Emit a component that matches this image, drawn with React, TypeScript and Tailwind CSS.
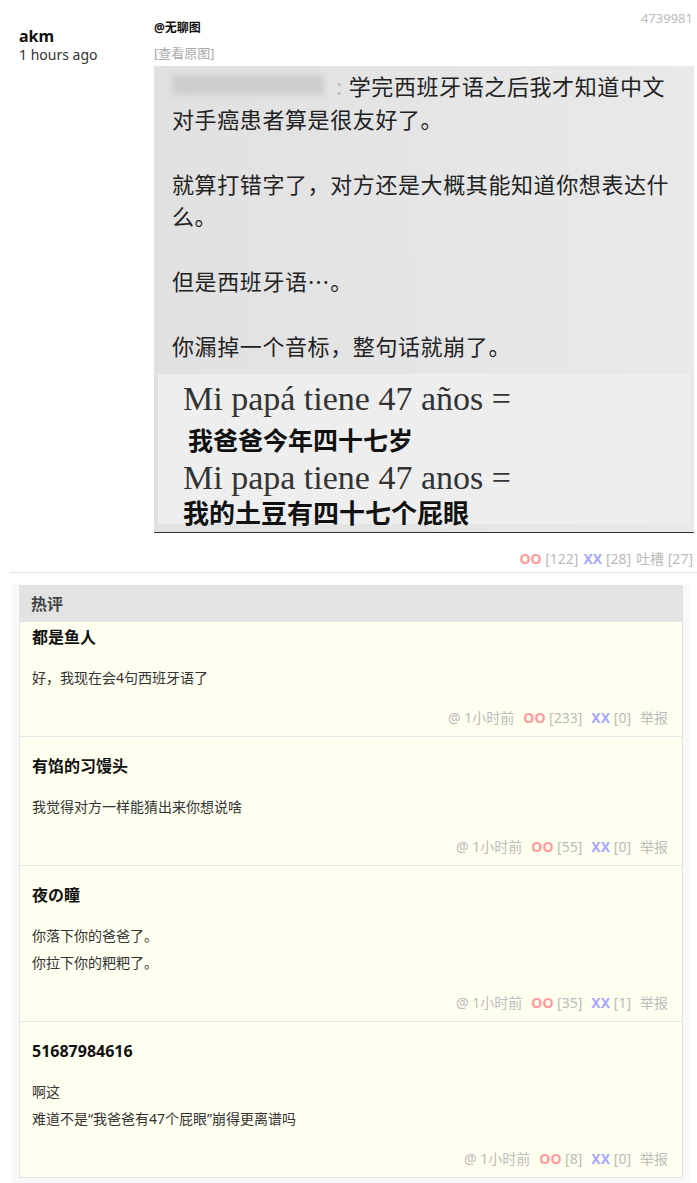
const hot = [
  {
    name: "都是鱼人",
    body: ["好，我现在会4句西班牙语了"],
    oo: 233,
    xx: 0,
    first: true,
  },
  { name: "有馅的习馒头", body: ["我觉得对方一样能猜出来你想说啥"], oo: 55, xx: 0 },
  { name: "夜の瞳", body: ["你落下你的爸爸了。", "你拉下你的粑粑了。"], oo: 35, xx: 1 },
  {
    name: "51687984616",
    body: ["啊这", "难道不是“我爸爸有47个屁眼”崩得更离谱吗"],
    oo: 8,
    xx: 0,
  },
];

function Comment({ c }: { c: (typeof hot)[number] }) {
  return (
    <div
      className={`border-b border-[#e6e6e6] bg-[#fffff0] px-[12px] pb-[8px] last:border-b-0 ${
        c.first ? "pt-[5px]" : "pt-[19px]"
      }`}
    >
      <div className="text-[16px] leading-[20px] font-bold text-[#111]">{c.name}</div>
      <div className="mt-[17px] text-[14px] leading-[27px] text-[#333]">
        {c.body.map((line) => (
          <div key={line}>{line}</div>
        ))}
      </div>
      <div className="mt-[17px] flex justify-end gap-[9px] pr-[2px] text-[14px] leading-[20px] text-[#bbb]">
        <span>@ 1小时前</span>
        <span>
          <b className="text-[#ff9b9b]">OO</b> [{c.oo}]
        </span>
        <span>
          <b className="text-[#a8a8ff]">XX</b> [{c.xx}]
        </span>
        <span>举报</span>
      </div>
    </div>
  );
}

export default function App() {
  return (
    <div className="relative min-h-[1183px] bg-white font-['Noto_Sans','Noto_Sans_CJK_SC',sans-serif] text-[#222]">
      <span className="absolute top-[10px] right-[4px] text-[13px] leading-[16px] text-[#bbb]">4739981</span>

      <div className="flex">
        <div className="w-[154px] shrink-0 pt-[27px] pl-[19px]">
          <div className="text-[16px] leading-[18px] font-bold text-[#111]">akm</div>
          <div className="mt-[1px] text-[14px] leading-[18px] text-[#333]">1 hours ago</div>
        </div>

        <div className="w-[540px] pt-[20px]">
          <div className="text-[12px] leading-[16px] font-bold text-[#111]">@无聊图</div>
          <div className="mt-[9px] text-[13px] leading-[16px] text-[#aaa]">[查看原图]</div>

          <div className="mt-[5px] h-[467px] border-b-[1.5px] border-[#333] bg-gradient-to-r from-[#e1e1e1] to-[#e9e9e9] pt-[3px] text-[#222] font-['Noto_Sans_CJK_SC',sans-serif]">
            <div className="pl-[18px] text-[22px] leading-[32.5px] tracking-[0.6px]">
              <div className="flex items-center">
                <span className="mr-[12px] inline-block h-[20px] w-[152px] rounded-[3px] bg-[#cdcdcd] blur-[3px]" />
                <span className="text-[#bbb]">:</span>
                <span className="ml-[6px]">学完西班牙语之后我才知道中文</span>
              </div>
              <div>对手癌患者算是很友好了。</div>
              <div className="h-[32.5px]" />
              <div>就算打错字了，对方还是大概其能知道你想表达什</div>
              <div>么。</div>
              <div className="h-[32.5px]" />
              <div>但是西班牙语…。</div>
              <div className="h-[32.5px]" />
              <div>你漏掉一个音标，整句话就崩了。</div>
            </div>

            <div className="mx-[4px] mt-[12px] h-[150px] bg-[#eeeeee] pt-[5px] pl-[25px]">
              <div className="font-['Liberation_Serif',serif] text-[34px] leading-[40px] text-[#333]">
                Mi papá tiene 47 años =
              </div>
              <div className="pl-[5px] text-[25px] leading-[40px] font-bold text-[#111]">我爸爸今年四十七岁</div>
              <div className="font-['Liberation_Serif',serif] text-[34px] leading-[38px] text-[#333]">
                Mi papa tiene 47 anos =
              </div>
              <div className="text-[26px] leading-[30px] font-bold text-[#111]">我的土豆有四十七个屁眼</div>
            </div>
          </div>
        </div>
      </div>

      <div className="mt-[16px] flex justify-end gap-[5px] pr-[4px] text-[14px] leading-[20px] text-[#bbb]">
        <span>
          <b className="text-[#ff9b9b]">OO</b> [122]
        </span>
        <span>
          <b className="text-[#a8a8ff]">XX</b> [28]
        </span>
        <span>吐槽 [27]</span>
      </div>

      <div className="mt-[3px] ml-[10px] border-t border-[#e3e3e3]" />

      <div className="mt-[11px] mr-[7px] ml-[12px] bg-[#f9f9f9] pt-[1px] pr-[7px] pb-[7px] pl-[7px]">
        <div className="border border-[#e3e3e3]">
          <div className="bg-[#e3e3e3] px-[11px] text-[16px] leading-[36px] font-bold text-[#444]">热评</div>
          {hot.map((c) => (
            <Comment key={c.name} c={c} />
          ))}
        </div>
      </div>
    </div>
  );
}
